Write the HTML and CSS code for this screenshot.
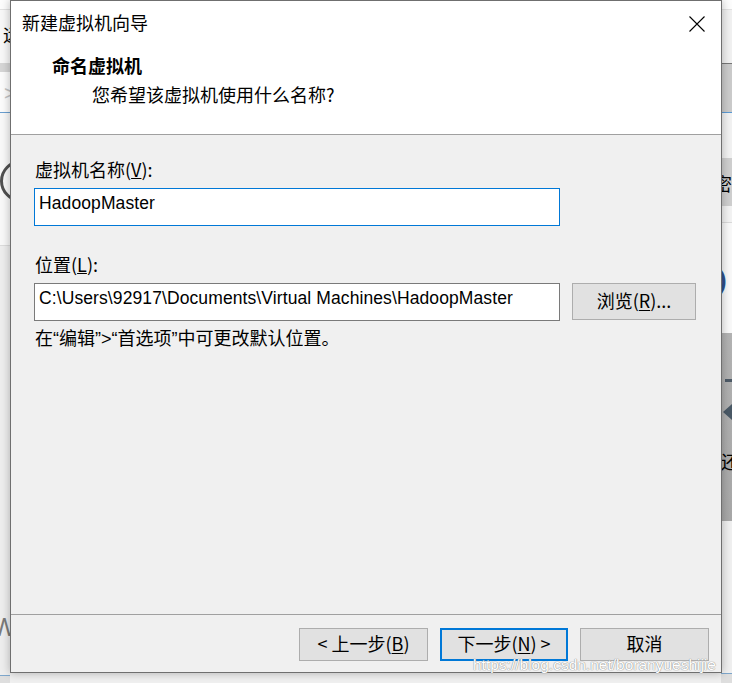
FILE: index.html
```html
<!DOCTYPE html>
<html lang="zh-CN">
<head>
    <meta charset="UTF-8">
    <meta name="viewport" content="width=device-width, initial-scale=1.0">
    <title>新建虚拟机向导</title>
    <link rel="stylesheet" href="styles.css">
</head>
<body>
<div class="desk">

    <!-- bits of the windows behind the dialog -->
    <div class="strip strip-left">
        <div class="band b-top"></div>
        <div class="band b-l2"><span class="peek peek-l1">远</span></div>
        <div class="band b-l3"></div>
        <div class="band b-l4"><span class="peek peek-l2">&gt;</span></div>
        <div class="band b-l5"><div class="ring"></div></div>
        <div class="band b-l6"><span class="peek peek-l3">W</span></div>
        <div class="band b-bottom"></div>
    </div>

    <div class="strip strip-right">
        <div class="band b-top"></div>
        <div class="band b-r2"></div>
        <div class="band b-r3"></div>
        <div class="band b-r4"></div>
        <div class="band b-r5"><span class="peek peek-r1">密</span></div>
        <div class="band b-r6"></div>
        <div class="band b-r7"><span class="peek peek-r2">)</span></div>
        <div class="band b-r8">
            <span class="dash"></span>
            <span class="arrow"></span>
            <span class="peek peek-r3">还</span>
        </div>
        <div class="band b-r9"></div>
        <div class="band b-bottom"></div>
    </div>

    <!-- wizard dialog -->
    <div class="dialog">
        <div class="head">
            <div class="titlebar">
                <span class="title">新建虚拟机向导</span>
                <svg class="close" width="16" height="16" viewBox="0 0 16 16">
                    <path d="M0.5 0.5 L15.5 15.5 M15.5 0.5 L0.5 15.5" stroke="#000" stroke-width="1.1" fill="none"/>
                </svg>
            </div>
            <div class="intro">
                <div class="intro-title">命名虚拟机</div>
                <div class="intro-sub">您希望该虚拟机使用什么名称?</div>
            </div>
        </div>

        <div class="content">
            <div class="field-label">虚拟机名称(<u>V</u>):</div>
            <div class="input input-focus">HadoopMaster</div>

            <div class="field-label label-gap">位置(<u>L</u>):</div>
            <div class="row">
                <div class="input">C:\Users\92917\Documents\Virtual Machines\HadoopMaster</div>
                <button class="btn btn-browse">浏览(<u>R</u>)...</button>
            </div>

            <p class="hint">在“编辑”&gt;“首选项”中可更改默认位置。</p>
        </div>

        <div class="footer">
            <button class="btn">&lt; 上一步(<u>B</u>)</button>
            <button class="btn btn-default">下一步(<u>N</u>) &gt;</button>
            <button class="btn">取消</button>
        </div>
    </div>

    <div class="watermark">https://blog.csdn.net/boranyueshijie</div>
</div>
</body>
</html>
```

FILE: styles.css
```css
body {
    margin: 0;
    font-family: "Noto Sans CJK SC", sans-serif;
    color: #000;
}

.desk {
    position: relative;
    width: 732px;
    height: 683px;
    overflow: hidden;
    background: #f0f0f0;
    display: flex;
    justify-content: space-between;
}

/* background windows peeking out on the sides */
.strip {
    width: 10px;
    display: flex;
    flex-direction: column;
    overflow: hidden;
}

.strip-right {
    width: 11px;
}

.band {
    position: relative;
    overflow: hidden;
    flex: none;
}

.b-top {
    height: 9px;
    background: #fdfdfd;
    border-bottom: 1px solid #e2e2e2;
}

.b-bottom {
    height: 8px;
    background: #dedede;
    border-top: 1px solid #7ea7cc;
    flex: 1;
}

.b-l2 {
    height: 53px;
    background: #f8f8f8;
}

.b-l3 {
    height: 9px;
    background: #d6d6d6;
}

.b-l4 {
    height: 40px;
    background: #fcfcfc;
    border-bottom: 1px solid #6a9fd0;
}

.b-l5 {
    height: 132px;
    background: #f9f9f9;
    border-bottom: 1px solid #dcdcdc;
}

.b-l6 {
    height: 429px;
    background: #eeeeee;
}

.peek {
    position: absolute;
    line-height: 1;
    white-space: nowrap;
}

.peek-l1 {
    top: 15px;
    left: 3px;
    font-size: 18px;
}

.peek-l2 {
    top: 11px;
    left: 4px;
    font-size: 20px;
    color: #c4c4c4;
    font-family: "Liberation Sans", sans-serif;
}

.peek-l3 {
    top: 368px;
    left: -8px;
    font-size: 26px;
    color: #7a7a7a;
    font-family: "Liberation Sans", sans-serif;
}

.ring {
    position: absolute;
    top: 47px;
    left: 0;
    width: 36px;
    height: 36px;
    border: 3px solid #505050;
    border-radius: 50%;
}

.b-r2 {
    height: 53px;
    background: #f1f1f1;
    border-bottom: 1px solid #777;
}

.b-r3 {
    height: 48px;
    background: #cbcbcb;
    border-bottom: 1px solid #5b9bd5;
}

.b-r4 {
    height: 45px;
    background: #f2f2f2;
}

.b-r5 {
    height: 48px;
    background: #cfcfcf;
}

.peek-r1 {
    top: 16px;
    left: -7px;
    font-size: 18px;
}

.b-r6 {
    height: 16px;
    background: #f3f3f3;
    border-bottom: 1px solid #dadada;
}

.b-r7 {
    height: 110px;
    background: #f9f9f9;
}

.peek-r2 {
    top: 44px;
    left: -3px;
    font-size: 26px;
    font-weight: bold;
    color: #2d4f8c;
    font-family: "Liberation Sans", sans-serif;
}

.b-r8 {
    height: 188px;
    background: linear-gradient(#b3b3b3, #a8a8a8);
}

.dash {
    position: absolute;
    top: 46px;
    left: 4px;
    width: 8px;
    height: 3px;
    background: #4e5b68;
}

.arrow {
    position: absolute;
    top: 70px;
    left: 2px;
    border-right: 10px solid #4a5966;
    border-top: 9px solid transparent;
    border-bottom: 9px solid transparent;
}

.peek-r3 {
    top: 119px;
    left: 0;
    font-size: 18px;
}

.b-r9 {
    height: 152px;
    background: #f0f0f0;
}

/* the wizard window */
.dialog {
    position: absolute;
    left: 10px;
    top: 0;
    width: 712px;
    height: 673px;
    box-sizing: border-box;
    border: 1px solid #6f6f6f;
    background: #f0f0f0;
    box-shadow: 0 0 9px rgba(0, 0, 0, 0.28);
    display: flex;
    flex-direction: column;
}

.head {
    height: 133px;
    background: #fff;
    border-bottom: 1px solid #a0a0a0;
    flex: none;
}

.titlebar {
    height: 44px;
    display: flex;
    align-items: center;
    justify-content: space-between;
    padding: 0 16px 0 11px;
}

.title {
    font-size: 18px;
    line-height: 24px;
    margin-top: -3px;
}

.close {
    margin-top: 1px;
}

.intro {
    padding: 6px 0 0 41px;
}

.intro-title {
    font-size: 18px;
    font-weight: bold;
    line-height: 29px;
}

.intro-sub {
    font-size: 18px;
    line-height: 29px;
    padding-left: 40px;
}

.content {
    flex: 1;
    padding: 22px 0 0 23px;
}

.field-label {
    font-size: 18px;
    line-height: 24px;
    margin-left: 1px;
    margin-bottom: 7px;
}

.label-gap {
    margin-top: 26px;
}

.input {
    width: 526px;
    height: 38px;
    box-sizing: border-box;
    border: 1px solid #7a7a7a;
    background: #fff;
    padding: 2px 0 0 4px;
    font-family: "Liberation Sans", sans-serif;
    font-size: 17.5px;
    line-height: 24px;
    letter-spacing: 0.1px;
    white-space: nowrap;
    overflow: hidden;
}

.input-focus {
    border-color: #0078d7;
}

.row {
    display: flex;
    align-items: flex-start;
    gap: 12px;
}

.btn {
    height: 33px;
    box-sizing: border-box;
    background: #e1e1e1;
    border: 1px solid #adadad;
    font-family: "Noto Sans CJK SC", sans-serif;
    font-size: 18px;
    line-height: 22px;
    color: #000;
    padding: 0 0 4px;
    width: 129px;
}

.btn u {
    text-underline-offset: 2px;
}

.btn-browse {
    width: 124px;
    height: 37px;
}

.btn-default {
    width: 128px;
    border: 2px solid #0078d7;
}

.hint {
    margin: 6px 0 0 1px;
    font-family: "Liberation Sans", "Noto Sans CJK SC", sans-serif;
    font-size: 18px;
    line-height: 24px;
}

.footer {
    height: 58px;
    flex: none;
    box-sizing: border-box;
    border-top: 1px solid #a0a0a0;
    display: flex;
    justify-content: flex-end;
    gap: 12px;
    padding: 13px 12px 0 0;
}

.watermark {
    position: absolute;
    left: 473px;
    top: 656px;
    font-family: "Liberation Sans", sans-serif;
    font-size: 15.5px;
    line-height: 18px;
    color: #fff;
    text-shadow: 0 0 1px #8a8a8a, 0 0 1px #8a8a8a;
}
```
